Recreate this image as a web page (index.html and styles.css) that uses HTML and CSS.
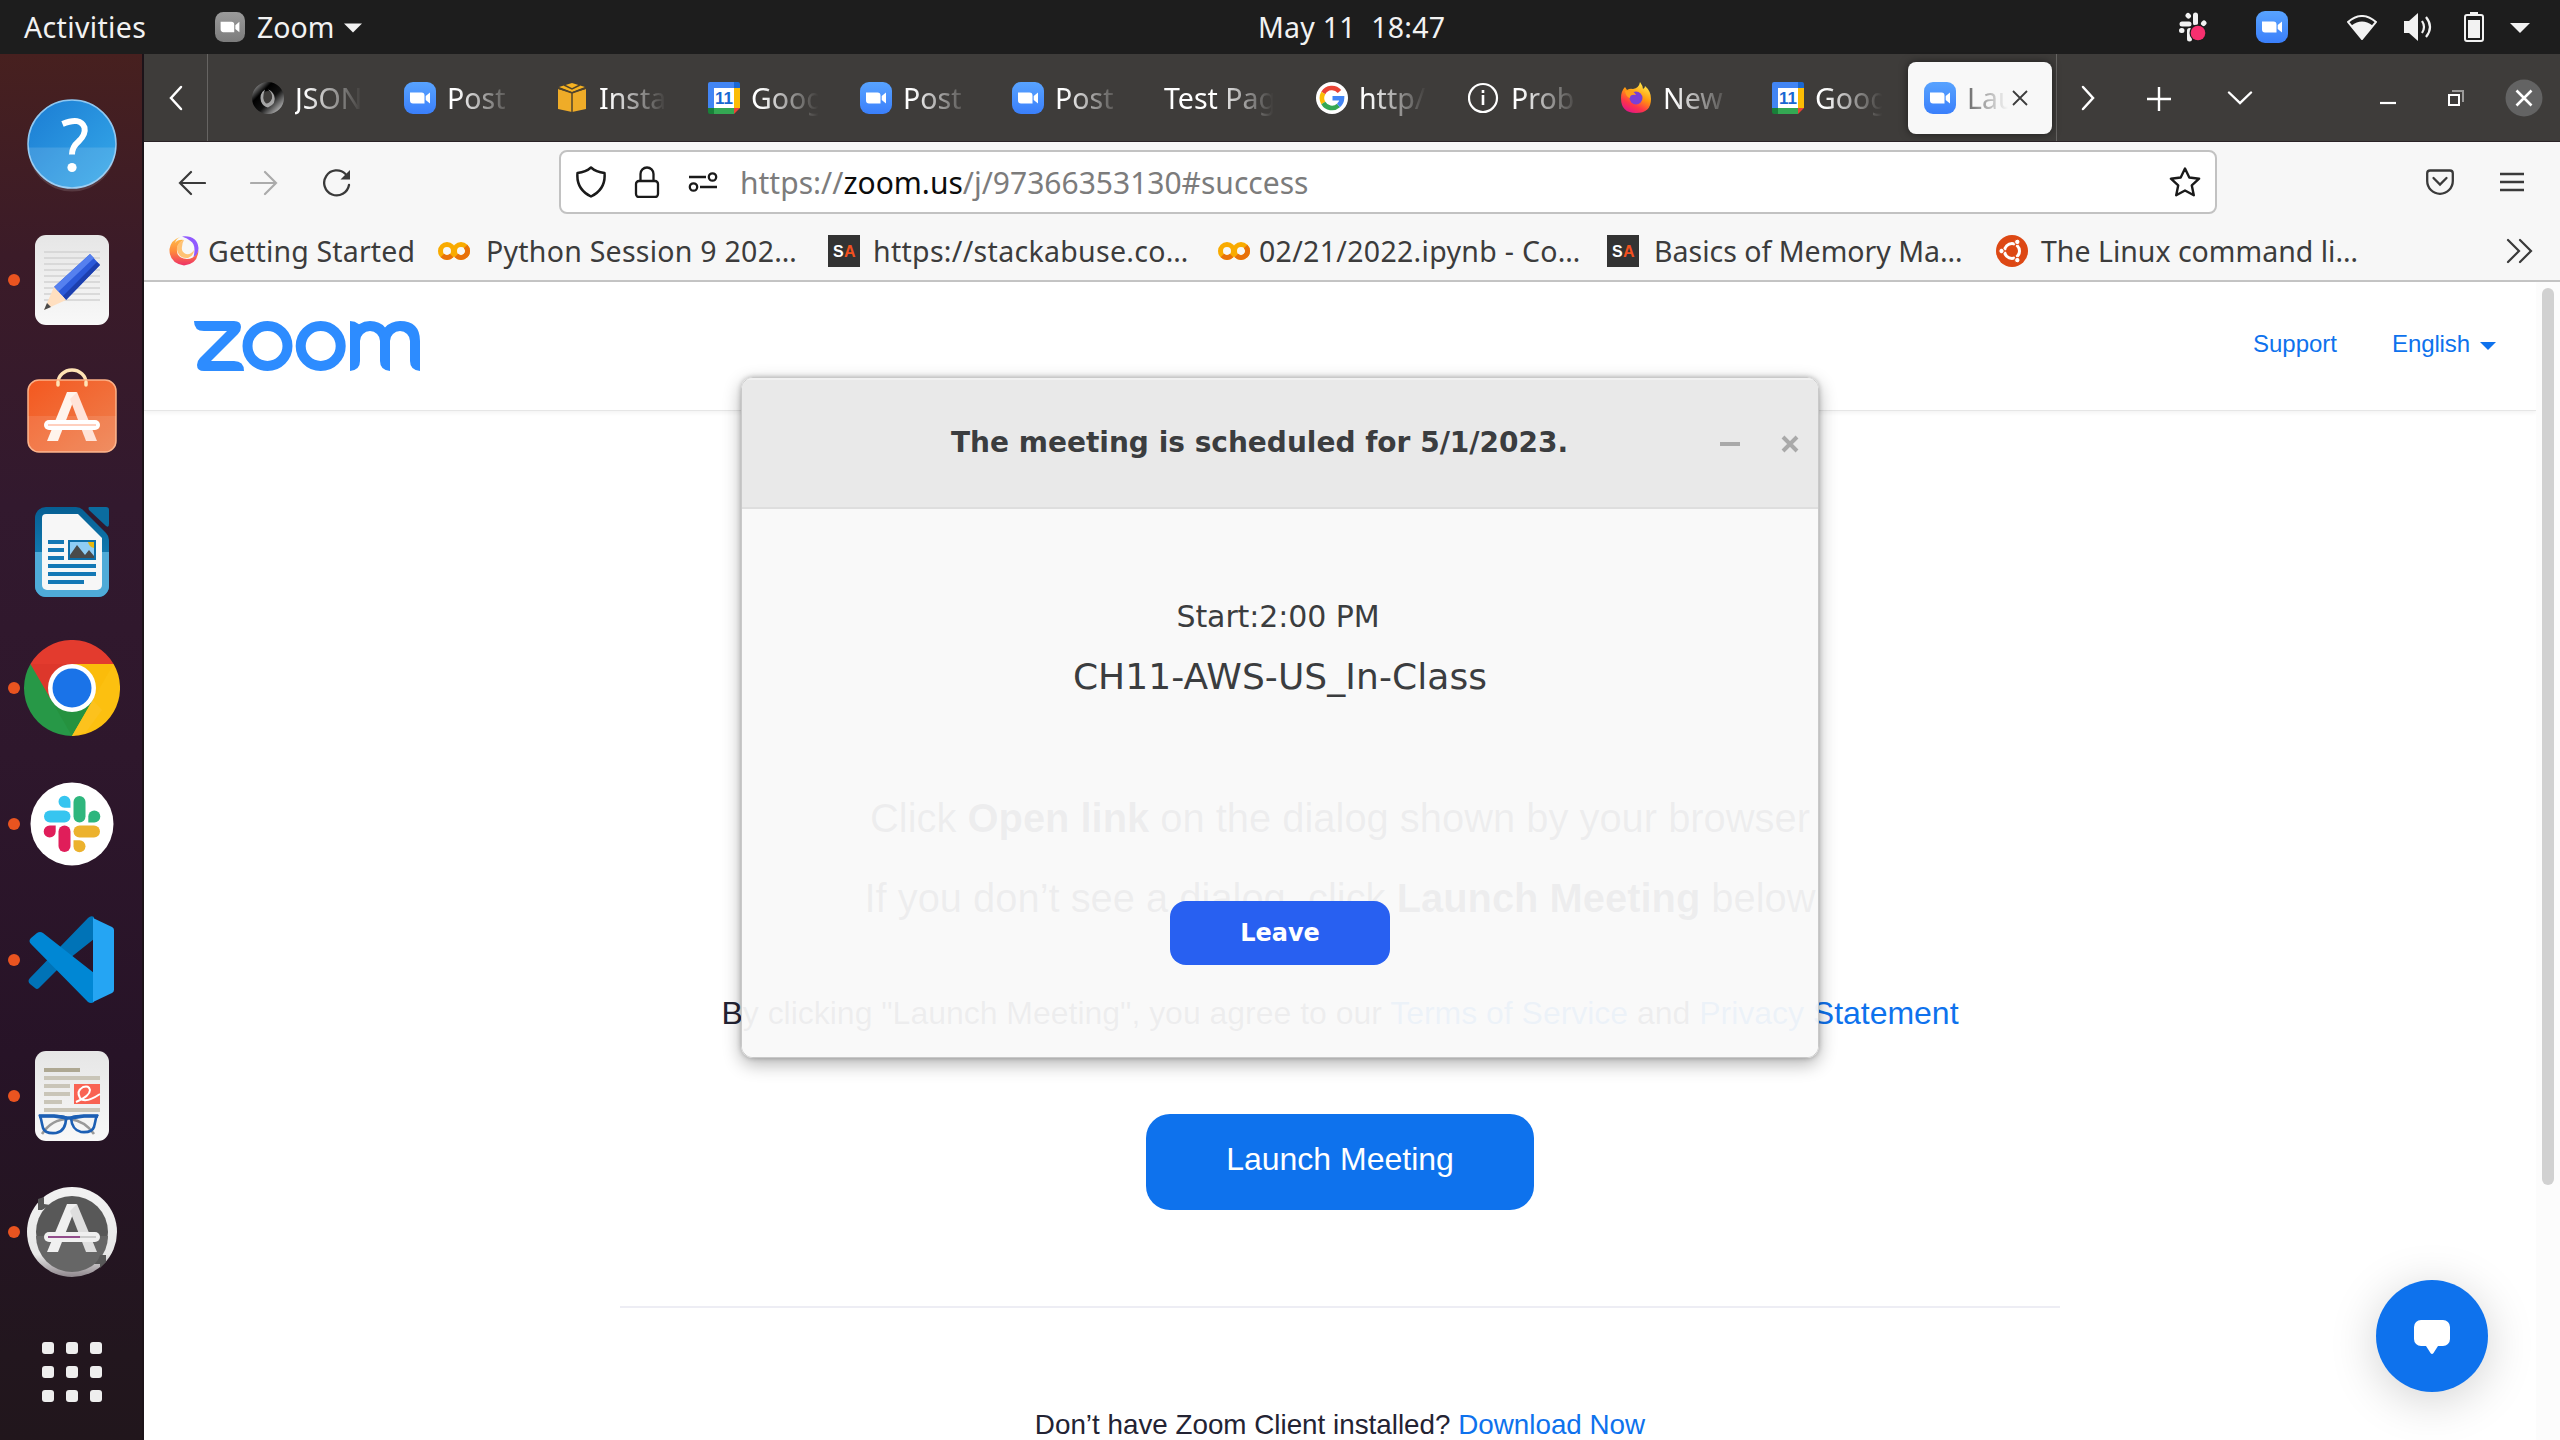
FILE: index.html
```html
<!DOCTYPE html>
<html lang="en">
<head>
<meta charset="utf-8">
<title>Launch Meeting - Zoom</title>
<link rel="stylesheet" href="styles.css">
</head>
<body>
<svg class="defs" width="0" height="0">
  <defs>
    <linearGradient id="zoomBlue" x1="0" y1="0" x2="0" y2="1"><stop offset="0" stop-color="#58a3ff"/><stop offset="1" stop-color="#3a7ffb"/></linearGradient>
    <linearGradient id="zoomGrey" x1="0" y1="0" x2="0" y2="1"><stop offset="0" stop-color="#9a9a9a"/><stop offset="1" stop-color="#7c7c7c"/></linearGradient>
    <linearGradient id="helpBlue" x1="0" y1="0" x2="1" y2="1"><stop offset="0" stop-color="#1b7cd3"/><stop offset="1" stop-color="#36aaea"/></linearGradient>
    <linearGradient id="paper" x1="0" y1="0" x2="0" y2="1"><stop offset="0" stop-color="#e6e6e6"/><stop offset="1" stop-color="#f8f8f8"/></linearGradient>
    <linearGradient id="shop" x1="0" y1="0" x2="1" y2="1"><stop offset="0" stop-color="#f4581f"/><stop offset="1" stop-color="#ee8150"/></linearGradient>
    <linearGradient id="writer" x1="0" y1="0" x2="0" y2="1"><stop offset="0" stop-color="#065f93"/><stop offset="1" stop-color="#1b90c8"/></linearGradient>
    <linearGradient id="firefox" x1="0.8" y1="0" x2="0.3" y2="1"><stop offset="0" stop-color="#fff44f"/><stop offset=".45" stop-color="#ff980e"/><stop offset=".75" stop-color="#ff3647"/><stop offset="1" stop-color="#e31587"/></linearGradient>
    <linearGradient id="swirl" x1="0" y1="0" x2="0" y2="1"><stop offset="0" stop-color="#ffc04a"/><stop offset=".5" stop-color="#ff8a3a"/><stop offset="1" stop-color="#ee3067"/></linearGradient>
    <linearGradient id="ring" x1="0" y1="0" x2="1" y2="1"><stop offset="0" stop-color="#777"/><stop offset=".25" stop-color="#000"/><stop offset=".6" stop-color="#111"/><stop offset="1" stop-color="#aaa"/></linearGradient>
    <linearGradient id="updater" x1="0" y1="0" x2="0" y2="1"><stop offset="0" stop-color="#f2f2f2"/><stop offset=".75" stop-color="#e8e8e8"/><stop offset="1" stop-color="#8e868c"/></linearGradient>
    <symbol id="i-zoom" viewBox="0 0 32 32"><rect width="32" height="32" rx="9" fill="url(#zoomBlue)"/><path d="M6 10.5h11.5a3 3 0 0 1 3 3v8H9a3 3 0 0 1-3-3zM21.700 14l4.300-3.500v11L21.700 18z" fill="#fff"/></symbol>
    <symbol id="i-cal" viewBox="0 0 32 32"><path d="M2 0h24v6H6v20H0V2a2 2 0 0 1 2-2z" fill="#4285f4"/><path d="M26 0h4a2 2 0 0 1 2 2v4h-6z" fill="#1967d2"/><path d="M26 6h6v20h-6z" fill="#fbbc04"/><path d="M6 26h20v6H6z" fill="#34a853"/><path d="M0 26h6v6H2a2 2 0 0 1-2-2z" fill="#188038"/><path d="M26 26h6l-6 6z" fill="#ea4335"/><path d="M6 6h20v20H6z" fill="#fff"/><text x="16" y="22" text-anchor="middle" class="cal-day">11</text></symbol>
    <symbol id="i-colab" viewBox="0 0 32 20"><circle cx="9" cy="10" r="6.500" fill="none" stroke="#f9ab00" stroke-width="5"/><circle cx="23" cy="10" r="6.500" fill="none" stroke="#f9ab00" stroke-width="5"/><path d="M27.600 5.400a6.500 6.500 0 0 1-9.200 9.200M4.400 14.600a6.500 6.500 0 0 0 9.200 0" fill="none" stroke="#e8710a" stroke-width="5"/></symbol>
    <symbol id="i-sa" viewBox="0 0 32 32"><rect width="32" height="32" fill="#333"/><text x="5" y="21.500" class="sa" fill="#fff">S</text><text x="16" y="21.500" class="sa" fill="#f4511e">A</text></symbol>
  </defs>
</svg>

<header class="topbar">
  <span class="activities">Activities</span>
  <svg class="app-icon" viewBox="0 0 32 32"><rect width="32" height="32" rx="9" fill="url(#zoomGrey)"/><path d="M6 10.500h11.500a3 3 0 0 1 3 3v8H9a3 3 0 0 1-3-3zM21.700 14l4.300-3.500v11L21.700 18z" fill="#fff"/></svg>
  <span class="app-name">Zoom</span>
  <svg class="caret" viewBox="0 0 20 10"><path d="M0 0h20L10 10z" fill="#f2f2f2"/></svg>
  <span class="clock">May 11  18:47</span>
  <div class="tray">
    <svg class="t-slack" viewBox="0 0 30 30" width="30" height="30"><g stroke="#f2f2f2" stroke-width="5" stroke-linecap="round" fill="none"><path d="M4 12h7M17.500 3v8M11.500 18.500V27M10 3.500l.5.5M26 11l-.5.500M3.500 18.500l.5 0"/></g><circle cx="20" cy="21" r="8.500" fill="#1d1d1d"/><circle cx="20" cy="21" r="7.300" fill="#f6306f"/></svg>
    <svg class="t-zoom" width="32" height="32"><use href="#i-zoom"/></svg>
    <svg class="t-wifi" viewBox="0 0 30 25" width="30" height="25"><path d="M1 7q14-12 28 0L15 24z" fill="none" stroke="#f2f2f2" stroke-width="2"/><path d="M4.500 10.500q10.500-8 21 0L15 24z" fill="#f2f2f2"/></svg>
    <svg class="t-vol" viewBox="0 0 30 30" width="30" height="30"><path d="M1 9h5l9-8v28l-9-8H1z" fill="#f2f2f2"/><path d="M19 9q4 6 0 12M23 5q8 10 0 20" fill="none" stroke="#f2f2f2" stroke-width="2.200"/></svg>
    <svg class="t-bat" viewBox="0 0 20 30" width="20" height="30"><rect x="1" y="3" width="18" height="26" rx="2" fill="none" stroke="#f2f2f2" stroke-width="2"/><path d="M6 0h8v3H6zM4 8h12v18H4z" fill="#f2f2f2"/></svg>
    <svg class="caret" viewBox="0 0 20 10"><path d="M0 0h20L10 10z" fill="#f2f2f2"/></svg>
  </div>
</header>

<div class="desktop">
  <nav class="dock">
    <div class="dock-item"><svg viewBox="0 0 96 96"><circle cx="48" cy="48" r="44" fill="url(#helpBlue)" stroke="#8fc8f2" stroke-width="1.500"/><path d="M4 51.500h88a44 44 0 0 1-88 0z" fill="#fff" opacity=".13"/><path d="M38.500 28q18-7.500 22 3.500 1.500 7-6 14-6.500 5.500-6.500 13" fill="none" stroke="#fff" stroke-width="6"/><circle cx="48" cy="71.500" r="4.600" fill="#fff"/></svg></div>
    <div class="dock-item running"><svg viewBox="0 0 96 96"><rect x="11" y="3" width="74" height="90" rx="11" fill="url(#paper)"/><path d="M20 20h56M20 26h56M20 32h56M20 38h56M20 44h56M20 50h56M20 56h56M20 62h56M20 68h56" stroke="#d2d2d2" stroke-width="1.700"/><path d="M30 55l36-33 10 11-34 35z" fill="#2b59d9"/><path d="M30 55l36-33 4 4-36 34z" fill="#5580ef"/><path d="M39 64l34-34 3 3-34 35z" fill="#1c3fae"/><path d="M30 55l12 13-22 10z" fill="#ffdfc0"/><path d="M23 71l4 4-7 3z" fill="#4a4a4a"/></svg></div>
    <div class="dock-item raised"><svg viewBox="0 0 96 96"><path d="M34 20v-3a14 13 0 0 1 28 0v3" fill="none" stroke="#ffe3b5" stroke-width="3.500"/><rect x="4" y="14" width="88" height="72" rx="11" fill="url(#shop)" stroke="#fbb188" stroke-width="1.500"/><path d="M4 50h88v25a11 11 0 0 1-11 11H15A11 11 0 0 1 4 75z" fill="#fff" opacity=".1"/><path d="M34 19v-3M62 19v-3" stroke="#ffe3b5" stroke-width="3.500" stroke-linecap="round"/><path d="M23 75l20-49h10L34 75z" fill="#fff4ec"/><path d="M62 75L46 33l7-7 20 49z" fill="#ffe3d8"/><rect x="20" y="54" width="56" height="10" rx="5" fill="#fff"/><path d="M24 59h48" stroke="#ffd0bf" stroke-width="2"/></svg></div>
    <div class="dock-item"><svg viewBox="0 0 96 96"><path d="M22 3h30q4 0 7 3l23 23q3 3 3 7v46a11 11 0 0 1-11 11H22a11 11 0 0 1-11-11V14A11 11 0 0 1 22 3z" fill="url(#writer)"/><path d="M11 48h74v34a11 11 0 0 1-11 11H22a11 11 0 0 1-11-11z" fill="#4fabd8"/><path d="M65 3h17q3 0 3 3v14q0 4-3 2L65 6q-1-2 0-3z" fill="#0b6c9f"/><path d="M22 10h32l24 24v47a5 5 0 0 1-5 5H23a5 5 0 0 1-5-5V14q0-4 4-4z" fill="#f7f7f7"/><path d="M24 38h16M24 46h16M24 54h16M24 62h48M24 70h48M24 78h36" stroke="#1478b5" stroke-width="4"/><path d="M44 36h28v20H44z" fill="#0d6ea8"/><path d="M46 38h24v16H46z" fill="#8fcdf5"/><path d="M64 38h6v6q-5-1-6-6z" fill="#e6b80f"/><path d="M46 54v-3l7-10 8 10 4-5 5 6v2z" fill="#4a4a4a"/></svg></div>
    <div class="dock-item running"><svg viewBox="0 0 96 96"><path d="M48 48L6.430 24A48 48 0 0 1 89.600 24z" fill="#e33b2e"/><path d="M48 48L89.600 24A48 48 0 0 1 48 96z" fill="#fcc010"/><path d="M48 48V96A48 48 0 0 1 6.430 24z" fill="#279847"/><path d="M6.430 24L27.200 60 48 48V24z" fill="#dd372b"/><path d="M48 24H89.600L68.800 60 48 48z" fill="#fbbc0a"/><path d="M68.800 60L48 96 27.200 60 48 48z" fill="#25923f"/><path d="M68.800 60L48 96 62 92 78 70z" fill="#fcc21d"/><circle cx="48" cy="48" r="24" fill="#fff"/><circle cx="48" cy="48" r="19.500" fill="#1a73e8"/></svg></div>
    <div class="dock-item running"><svg viewBox="0 0 96 96"><circle cx="48" cy="48" r="41.500" fill="#fff"/><g fill="#36c5f0"><rect x="20" y="34.500" width="26.500" height="12" rx="6"/><path d="M46.500 31.700h-5.800a6 6 0 1 1 5.800-6z"/></g><g fill="#2eb67d"><rect x="49.500" y="20" width="12" height="26.500" rx="6"/><path d="M64.300 46.500v-6a6 6 0 1 1 6 6z"/></g><g fill="#ecb22e"><rect x="49.500" y="49.500" width="26.500" height="12" rx="6"/><path d="M49.500 64.300h6a6 6 0 1 1-6 6z"/></g><g fill="#e01e5a"><rect x="34.500" y="49.500" width="12" height="26.500" rx="6"/><path d="M31.700 49.500v6a6 6 0 1 1-6-6z"/></g></svg></div>
    <div class="dock-item running"><svg viewBox="0 0 96 96"><path d="M7 73q-3-3 0-6L65 7q3-3 6-1v22L42 51 16 77q-2 2-4 0z" transform="translate(-1 -1)" fill="#0073b7"/><path d="M7 31q-3-3 0-6l6-5q3-2 6 0l51 40v29q-3 2-6 0z" transform="translate(0 1)" fill="#0087d4"/><path d="M69 6l19 9q2 1 2 3v60q0 2-2 3l-19 9z" fill="#25a5f3"/></svg></div>
    <div class="dock-item running"><svg viewBox="0 0 96 96"><rect x="11" y="3" width="74" height="90" rx="11" fill="url(#paper)"/><path d="M20 22h36" stroke="#aea893" stroke-width="4"/><path d="M20 30h56M20 38h26M20 46h26M20 54h18M20 62h56" stroke="#c9c5b8" stroke-width="4"/><path d="M50 36h26v20H50z" fill="#f96353"/><path d="M52 54q14-6 14-12-1-5-7-3-7 4-3 11 5 6 20-4" fill="none" stroke="#fff" stroke-width="2"/><path d="M18 86q10-15 26-15M70 86q-9-13-24-15" fill="none" stroke="#999" stroke-width="2.600"/><path d="M16 68h17q8 0 9 2 0 13-10 15-11 1-13-5-1-4-2-9zM73 68H56q-8 0-9 2 1 12 10 14 11 1 13-5 1-4 2-9z" fill="none" stroke="#1c5fb4" stroke-width="2.600"/><path d="M15 68h15l13 2h4l13-2h14" fill="none" stroke="#1c5fb4" stroke-width="3.600"/></svg></div>
    <div class="dock-item running"><svg viewBox="0 0 96 96"><circle cx="48" cy="48" r="45" fill="url(#updater)"/><circle cx="48" cy="48" r="36" fill="#585858"/><path d="M12 52h72a36 36 0 0 1-72 0z" fill="#666"/><path d="M14 15l6-2v7l6 1q-6 4-8 5h-4zM82 71v7l-6 6v-4h-6q5-4 6-9z" fill="#585858"/><path d="M23 68l20-48h10L34 68z" fill="#f0f0f0"/><path d="M62 68L46 27l7-7 20 48z" fill="#dedede"/><rect x="20" y="48" width="56" height="10" rx="5" fill="#f0f0f0"/><path d="M24 53h48" stroke="#ccc" stroke-width="2"/><path d="M24 53h32" stroke="#924d8b" stroke-width="2"/></svg></div>
    <div class="dock-item apps"><svg viewBox="0 0 96 96"><g fill="#eee"><rect x="18" y="18" width="12" height="12" rx="3"/><rect x="42" y="18" width="12" height="12" rx="3"/><rect x="66" y="18" width="12" height="12" rx="3"/><rect x="18" y="42" width="12" height="12" rx="3"/><rect x="42" y="42" width="12" height="12" rx="3"/><rect x="66" y="42" width="12" height="12" rx="3"/><rect x="18" y="66" width="12" height="12" rx="3"/><rect x="42" y="66" width="12" height="12" rx="3"/><rect x="66" y="66" width="12" height="12" rx="3"/></g></svg></div>
  </nav>

  <main class="browser">
    <div class="tabstrip">
      <div class="scroll-left"><svg viewBox="0 0 14 26" width="14" height="26"><path d="M12 2L2 13l10 11" fill="none" stroke="#fff" stroke-width="2.500" stroke-linecap="round"/></svg></div>
      <div class="tabs">
        <div class="tab"><svg class="fav" viewBox="0 0 32 32"><circle cx="16" cy="16" r="11.500" fill="none" stroke="url(#ring)" stroke-width="9"/><path d="M13 7.500q-6 4-4 12 2 5 7 6 9-4 6-12-2-5-6-6 5 4 4 9-2 5-6 5-5-4-1-14z" fill="#a5a5a5"/></svg><span class="tab-text">JSON</span></div>
        <div class="tab"><svg class="fav"><use href="#i-zoom"/></svg><span class="tab-text">Post</span></div>
        <div class="tab"><svg class="fav" viewBox="0 0 32 32"><path d="M2 7l14 4v19L2 27zM30 7l-14 4v19l14-3z" fill="#efac28"/><path d="M16 1l13 4-13 5L3 5z" fill="#f6b221"/><path d="M2 6l14 5 14-5M16 11v19M8 3l8 4 8-4" fill="none" stroke="#51442c" stroke-width="1.500"/></svg><span class="tab-text">Insta</span></div>
        <div class="tab"><svg class="fav"><use href="#i-cal"/></svg><span class="tab-text">Goog</span></div>
        <div class="tab"><svg class="fav"><use href="#i-zoom"/></svg><span class="tab-text">Post</span></div>
        <div class="tab"><svg class="fav"><use href="#i-zoom"/></svg><span class="tab-text">Post</span></div>
        <div class="tab"><span class="tab-text wide">Test Pag</span></div>
        <div class="tab"><svg class="fav" viewBox="0 0 32 32"><circle cx="16" cy="16" r="16" fill="#fff"/><g fill="none" stroke-width="4.600"><path d="M23.500 9.500A10 10 0 0 0 7.300 11" stroke="#ea4335"/><path d="M7.300 11a10 10 0 0 0 0 10" stroke="#fbbc04"/><path d="M7.300 21A10 10 0 0 0 22.500 23.600" stroke="#34a853"/><path d="M22.500 23.600A10 10 0 0 0 26 16.300H16.500" stroke="#4285f4"/></g></svg><span class="tab-text">http/</span></div>
        <div class="tab"><svg class="fav" viewBox="0 0 32 32"><circle cx="15" cy="16" r="14" fill="none" stroke="#fff" stroke-width="2.200"/><path d="M15 13v10M15 8v3" stroke="#fff" stroke-width="2.600"/></svg><span class="tab-text">Prob</span></div>
        <div class="tab"><svg class="fav" viewBox="0 0 32 32"><path d="M20 0q3 4 3 7 2-1 2-3 6 5 6 13 0 14-15 14Q1 31 1 16q0-7 4-11l2 3q3-2 6-1 6-1 7-7z" fill="url(#firefox)"/><circle cx="16" cy="16" r="6.500" fill="#7a3fd6"/><path d="M5 9q8-2 11 4-6-1-6 3-4-1-5-7z" fill="#ff9d1c"/></svg><span class="tab-text">New</span></div>
        <div class="tab"><svg class="fav"><use href="#i-cal"/></svg><span class="tab-text">Goog</span></div>
        <div class="tab active"><svg class="fav"><use href="#i-zoom"/></svg><span class="tab-text">Lau</span><svg class="tab-close" viewBox="0 0 16 16"><path d="M1 1l14 14M15 1L1 15" stroke="#3d3d3d" stroke-width="1.800"/></svg></div>
      </div>
      <div class="strip-actions">
        <svg viewBox="0 0 14 26" width="14" height="26"><path d="M2 2l10 11L2 24" fill="none" stroke="#fff" stroke-width="2.500" stroke-linecap="round"/></svg>
        <svg class="plus" viewBox="0 0 24 24" width="24" height="24"><path d="M12 0v24M0 12h24" stroke="#fff" stroke-width="2.400"/></svg>
        <svg class="down" viewBox="0 0 26 14" width="26" height="14"><path d="M2 1.500L13 12 24 1.500" fill="none" stroke="#fff" stroke-width="2.400" stroke-linecap="round"/></svg>
      </div>
      <div class="window-actions">
        <svg class="min" viewBox="0 0 16 16" width="16" height="16"><path d="M0 13h16" stroke="#fff" stroke-width="2.200"/></svg>
        <svg class="restore" viewBox="0 0 16 16" width="16" height="16"><path d="M4 1h11v11" fill="none" stroke="#9c9b9a" stroke-width="2"/><path d="M1 5h10v10H1z" fill="none" stroke="#fff" stroke-width="2"/></svg>
        <svg viewBox="0 0 38 38" width="38" height="38"><circle cx="19" cy="19" r="18.500" fill="#636363"/><path d="M11.500 11.500l15 15M26.500 11.500l-15 15" stroke="#fff" stroke-width="2.600"/></svg>
      </div>
    </div>

    <div class="navbar">
      <svg class="nav-icon" viewBox="0 0 28 28"><path d="M27 14H2M13 3L2 14l11 11" fill="none" stroke="#3a3a3a" stroke-width="2.200" stroke-linecap="round"/></svg>
      <svg class="nav-icon fwd" viewBox="0 0 28 28"><path d="M1 14h25M15 3l11 11-11 11" fill="none" stroke="#ababab" stroke-width="2.200" stroke-linecap="round"/></svg>
      <svg class="nav-icon reload" viewBox="0 0 28 28"><path d="M26 16A12.500 12.500 0 1 1 22.500 5" fill="none" stroke="#3a3a3a" stroke-width="2.300" stroke-linecap="round"/><path d="M27 1v9.500h-9.500z" fill="#3a3a3a"/></svg>
      <div class="urlbar">
        <svg viewBox="0 0 30 32" width="30" height="32"><path d="M15 1.500Q20 6 28.500 7 30 23 15 30.500 0 23 1.500 7 10 6 15 1.500z" fill="none" stroke="#1a1a1a" stroke-width="2.500" stroke-linejoin="round"/></svg>
        <svg class="lock" viewBox="0 0 26 32" width="26" height="32"><rect x="2" y="15" width="22" height="16" rx="3" fill="none" stroke="#1a1a1a" stroke-width="2.300"/><path d="M6.500 15V8a6.500 6.500 0 0 1 13 0v7" fill="none" stroke="#1a1a1a" stroke-width="2.300"/></svg>
        <svg class="perms" viewBox="0 0 30 20" width="30" height="20"><circle cx="5.500" cy="15" r="3.700" fill="none" stroke="#1a1a1a" stroke-width="2.300"/><circle cx="24.500" cy="5" r="3.700" fill="none" stroke="#1a1a1a" stroke-width="2.300"/><path d="M1 5h17M12 15h17" stroke="#1a1a1a" stroke-width="2.300"/></svg>
        <span class="url">https://<b>zoom.us</b>/j/97366353130#success</span>
        <svg class="star" viewBox="0 0 32 30" width="32" height="30"><path d="M16 1.500l4.300 9 9.800 1.200-7.300 6.700 2 9.800L16 23.500l-8.800 4.700 2-9.800L1.900 11.700l9.800-1.200z" fill="none" stroke="#1a1a1a" stroke-width="2.400" stroke-linejoin="round"/></svg>
      </div>
      <svg class="pocket" viewBox="0 0 28 26" width="28" height="26"><path d="M4 1.500h20a2.800 2.800 0 0 1 2.800 2.800V12A12.800 12.800 0 0 1 1.200 12V4.300A2.800 2.800 0 0 1 4 1.500z" fill="none" stroke="#3a3a3a" stroke-width="2.300"/><path d="M7.500 9l6.500 6.500L20.500 9" fill="none" stroke="#3a3a3a" stroke-width="2.300" stroke-linecap="round"/></svg>
      <svg viewBox="0 0 24 20" width="24" height="20"><path d="M0 2h24M0 10h24M0 18h24" stroke="#3a3a3a" stroke-width="2.300"/></svg>
    </div>

    <div class="bookmarks">
      <div class="bm b1"><svg width="32" height="32" viewBox="0 0 32 32"><path d="M12 2Q3 5 1.500 14 1 28 16 30.500 30 29 30.500 15 27 24 19 24 8 23 9 14q1-7 7-9-6-1-9 3 1-4 5-6z" fill="url(#swirl)"/><path d="M16 5q-8 3-7 10 2 9 11 8 6-2 6-8-3 5-8 4-5-2-4-7 0-4 2-7z" fill="#ffc274"/><path d="M14 1.500Q29 0 30.500 13q0 6-5 9 3-12-3-16-3-3-8.500-4.500z" fill="#9059ff"/></svg><span>Getting Started</span></div>
      <div class="bm b2"><svg width="32" height="20"><use href="#i-colab"/></svg><span>Python Session 9 202…</span></div>
      <div class="bm b3"><svg width="32" height="32"><use href="#i-sa"/></svg><span>https://stackabuse.co…</span></div>
      <div class="bm b4"><svg width="32" height="20"><use href="#i-colab"/></svg><span>02/21/2022.ipynb - Co…</span></div>
      <div class="bm b5"><svg width="32" height="32"><use href="#i-sa"/></svg><span>Basics of Memory Ma…</span></div>
      <div class="bm b6"><svg width="32" height="32" viewBox="0 0 32 32"><circle cx="16" cy="16" r="16" fill="#dd4814"/><circle cx="16" cy="16" r="7.500" fill="none" stroke="#fff" stroke-width="3"/><path d="M16 16L4 16M16 16l6-10.400M16 16l6 10.400" stroke="#dd4814" stroke-width="1.500"/><g fill="#fff" stroke="#dd4814"><circle cx="5.500" cy="16" r="2.700"/><circle cx="21.300" cy="6.900" r="2.700"/><circle cx="21.300" cy="25.100" r="2.700"/></g></svg><span>The Linux command li…</span></div>
      <svg class="more" viewBox="0 0 28 26" width="28" height="26"><path d="M2 2l11 11L2 24M14 2l11 11-11 11" fill="none" stroke="#3a3a3a" stroke-width="2.200" stroke-linecap="round"/></svg>
    </div>

    <div class="viewport">
      <div class="page">
        <div class="site-header">
          <svg class="logo" viewBox="0 0 226 50" width="226" height="50" role="img" aria-label="zoom"><g fill="#2d8cff"><path d="M0 0H40q7 0 7 6 0 4-3 7L17 40h23q10 0 10 10H10q-7 0-7-6 0-4 3-7L33 10H10Q0 10 0 0z"/><path d="M156 0q5 0 9 3.200Q170 0 176 0q10 0 15 6.500Q197 0 206 0q20 0 20 20v30q-10-1-10-10V20a10 10 0 0 0-20 0v30q-10-1-10-10V20a10 10 0 0 0-20 0v20q0 9-10 10z"/></g><g fill="none" stroke="#2d8cff" stroke-width="10"><circle cx="73.500" cy="25" r="20"/><circle cx="126.700" cy="25" r="20"/></g></svg>
          <a class="support">Support</a>
          <a class="lang">English</a>
          <svg class="lang-caret" viewBox="0 0 16 8" width="16" height="8"><path d="M0 0h16L8 8z" fill="#0e72ed"/></svg>
        </div>
        <div class="content">
          <p class="line">Click <b>Open link</b> on the dialog shown by your browser</p>
          <p class="line">If you don’t see a dialog, click <b>Launch Meeting</b> below</p>
          <p class="terms">By clicking "Launch Meeting", you agree to our <a>Terms of Service</a> and <a>Privacy Statement</a></p>
          <button class="launch">Launch Meeting</button>
          <div class="divider"></div>
          <p class="download">Don’t have Zoom Client installed? <a>Download Now</a></p>
        </div>
      </div>
      <div class="scrollbar"><div class="thumb"></div></div>
    </div>
  </main>
</div>

<section class="dialog">
  <div class="dialog-head">
    <h1>The meeting is scheduled for 5/1/2023.</h1>
    <svg class="d-min" viewBox="0 0 20 4" width="20" height="4"><path d="M0 2h20" stroke="#a9a9a9" stroke-width="4"/></svg>
    <svg class="d-close" viewBox="0 0 18 18" width="18" height="18"><path d="M2 2l14 14M16 2L2 16" stroke="#a9a9a9" stroke-width="4"/></svg>
  </div>
  <div class="dialog-body">
    <p class="start">Start:2:00 PM</p>
    <p class="topic">CH11-AWS-US_In-Class</p>
    <button class="leave">Leave</button>
  </div>
</section>

<div class="chat"><svg viewBox="0 0 38 36" width="38" height="36"><path d="M8 1h22a7 7 0 0 1 7 7v12a7 7 0 0 1-7 7h-5l-4.500 7q-1.500 2-3 0L13 27H8a7 7 0 0 1-7-7V8a7 7 0 0 1 7-7z" fill="#fff"/></svg></div>
</body>
</html>
```
FILE: styles.css
```css
* { box-sizing: border-box; }
body { margin: 0; width: 2560px; height: 1440px; overflow: hidden; position: relative; background: #fff; font-family: "Noto Sans", "Open Sans", sans-serif; font-size: 28.5px; }
p, h1 { margin: 0; }
svg { flex: none; display: block; }
.defs { position: absolute; }
button { border: 0; padding: 0; font: inherit; color: #fff; }

/* system bar */
.topbar { height: 54px; background: #1d1d1d; color: #f2f2f2; display: flex; align-items: center; padding-left: 24px; white-space: pre; line-height: 54px; }
.activities { width: 191px; letter-spacing: .35px; }
.app-icon { width: 30px; height: 30px; }
.app-name { margin-left: 12px; width: 87px; }
.caret { width: 18px; height: 10px; margin-top: 2px; }
.clock { margin-left: 896px; width: 187px; letter-spacing: .25px; }
.tray { flex: 1; display: flex; align-items: center; padding-left: 733px; }
.t-zoom { margin-left: 48px; }
.t-wifi { margin-left: 59px; }
.t-vol { margin-left: 26px; }
.t-bat { margin-left: 31px; }
.tray .caret { margin-left: 26px; width: 20px; }

.desktop { display: flex; height: 1386px; }

/* dock */
.dock { width: 144px; padding-top: 22px; display: flex; flex-direction: column; background: linear-gradient(#47201f 0, #3b1b28 200px, #32192e 450px, #2e172c 700px, #271327 1000px, #22161e 1300px, #21161c); border-right: 2px solid #1c1319; }
.dock-item { height: 136px; position: relative; display: flex; align-items: center; justify-content: center; padding-left: 2px; flex: none; }
.dock-item svg { width: 96px; height: 96px; }
.running::before { content: ""; position: absolute; left: 8px; top: 62px; width: 12px; height: 12px; border-radius: 50%; background: #e95420; }
.raised { padding-bottom: 4px; }
.apps { padding-top: 8px; }

.browser { flex: 1; display: flex; flex-direction: column; }

/* tabs */
.tabstrip { height: 88px; background: #3e3c3a; border-bottom: 1px solid #2a2226; display: flex; color: #fff; }
.scroll-left { width: 64px; border-right: 1px solid #666462; display: flex; align-items: center; padding-left: 25px; }
.tabs { display: flex; align-items: center; gap: 8px; padding: 0 4px 0 28px; border-right: 1px solid #666462; }
.tab { width: 144px; height: 72px; padding-left: 16px; display: flex; align-items: center; border-radius: 8px; }
.fav { width: 32px; height: 32px; margin-right: 11px; }
.tab-text { width: 69px; line-height: 40px; overflow: hidden; white-space: nowrap; -webkit-mask-image: linear-gradient(90deg, #000 14%, transparent 98%); mask-image: linear-gradient(90deg, #000 14%, transparent 98%); }
.wide { width: 112px; -webkit-mask-image: linear-gradient(90deg, #000 48%, transparent 98%); mask-image: linear-gradient(90deg, #000 48%, transparent 98%); }
.active { background: #f8f8f8; box-shadow: 0 0 8px rgba(0,0,0,.5); color: #3a3a3a; }
.active .tab-text { width: 41px; -webkit-mask-image: linear-gradient(90deg, rgba(0,0,0,.75), transparent); mask-image: linear-gradient(90deg, rgba(0,0,0,.75), transparent); }
.tab-close { width: 16px; height: 16px; margin-left: 4px; }
.strip-actions { display: flex; align-items: center; padding-left: 24px; }
.plus { margin-left: 52px; margin-top: 2px; }
.down { margin-left: 56px; }
.window-actions { display: flex; align-items: center; margin-left: auto; padding-right: 17px; }
.restore { margin: 0 41px 0 52px; }

/* navigation */
.navbar { height: 80px; background: #f7f7f7; display: flex; align-items: center; padding-left: 34px; }
.nav-icon { width: 28px; height: 28px; margin-top: 2px; }
.fwd { margin-left: 44px; }
.reload { margin-left: 45px; }
.urlbar { margin-left: 208px; width: 1658px; height: 64px; border: 2px solid #c2c2c2; border-radius: 8px; background: #fff; display: flex; align-items: center; padding: 0 14px 0 15px; }
.lock { margin-left: 28px; }
.perms { margin-left: 28px; }
.url { margin-left: 22px; padding-top: 1px; flex: 1; color: #7c7c7c; font-size: 30px; line-height: 60px; }
.url b { font-weight: 400; color: #0c0c0c; }
.pocket { margin: 0 46px 0 209px; }

/* bookmarks */
.bookmarks { height: 60px; background: #f7f7f7; border-bottom: 2px solid #c4c4c4; display: flex; align-items: center; padding-left: 24px; color: #3c3c3c; white-space: nowrap; }
.bm { display: flex; align-items: center; line-height: 56px; }
.b1 { width: 270px; letter-spacing: .15px; } .b1 span { margin-left: 8px; }
.b2 { width: 390px; letter-spacing: .25px; } .b2 span { margin-left: 16px; }
.b3 { width: 390px; letter-spacing: .3px; } .b3 span { margin-left: 13px; }
.b4 { width: 389px; letter-spacing: .3px; } .b4 span { margin-left: 9px; }
.b5 { width: 389px; } .b5 span { margin-left: 15px; }
.b6 { width: 510px; } .b6 span { margin-left: 13px; }

/* web page */
.viewport { flex: 1; display: flex; min-height: 0; }
.page { width: 2392px; font-family: "Liberation Sans", Arial, sans-serif; color: #232333; }
.page a { color: #0e72ed; }
.site-header { height: 129px; display: flex; align-items: center; padding: 0 40px 0 50px; border-bottom: 1px solid #e6e6e6; box-shadow: 0 2px 4px rgba(0,0,0,.05); font-size: 24px; }
.support { margin-left: auto; padding-bottom: 5px; }
.lang { margin-left: 55px; padding-bottom: 5px; letter-spacing: -.1px; }
.lang-caret { margin-left: 10px; }
.content { display: flex; flex-direction: column; align-items: center; padding-top: 367px; white-space: nowrap; }
.line { font-size: 39.9px; line-height: 80px; }
.terms { font-size: 32px; line-height: 40px; margin-top: 55px; letter-spacing: -.02px; }
.launch { margin-top: 81px; width: 388px; height: 96px; padding-bottom: 6px; border-radius: 24px; background: #0e72ed; font-size: 32px; }
.divider { margin-top: 96px; width: 1440px; height: 2px; background: #ededf4; }
.download { margin-top: 99px; font-size: 27.8px; line-height: 36px; }
.scrollbar { width: 24px; background: #fcfcfc; padding: 6px; }
.thumb { width: 12px; height: 897px; border-radius: 6px; background: #d1d1d1; }

/* meeting window floating over the browser */
.dialog { position: absolute; left: 741px; top: 377px; width: 1078px; height: 681px; border-radius: 12px; overflow: hidden; border: 1px solid #c9c9c9; box-shadow: 0 6px 18px rgba(0,0,0,.3), 0 0 5px rgba(0,0,0,.25); font-family: "DejaVu Sans", sans-serif; color: #3b3d3f; display: flex; flex-direction: column; }
.dialog-head { height: 131px; background: #e9e9e9; border-bottom: 2px solid #dedede; box-shadow: inset 0 2px 0 #f1f1f1; display: flex; align-items: center; padding-left: 209px; }
.dialog-head h1 { font-size: 28px; line-height: 40px; width: 769px; white-space: nowrap; }
.d-min { margin-top: 3px; }
.d-close { margin-left: 41px; margin-top: 2px; }
.dialog-body { flex: 1; background: rgba(249,249,249,.95); display: flex; flex-direction: column; align-items: center; padding-top: 88px; }
.start { font-size: 30px; line-height: 40px; padding-right: 4px; letter-spacing: -.1px; }
.topic { font-size: 36px; line-height: 48px; margin-top: 16px; letter-spacing: .08px; }
.leave { margin-top: 200px; width: 220px; height: 64px; border-radius: 16px; background: #2860f1; font-weight: 700; font-size: 24px; padding-bottom: 1px; }

.chat { position: absolute; left: 2376px; top: 1280px; width: 112px; height: 112px; border-radius: 50%; background: #0e72ed; box-shadow: 0 8px 48px rgba(0,0,0,.18); display: flex; align-items: center; justify-content: center; padding-top: 2px; }

.cal-day { font: 700 17px "Liberation Sans", sans-serif; fill: #1967d2; }
.sa { font: 700 16px "Liberation Sans", sans-serif; }
```
